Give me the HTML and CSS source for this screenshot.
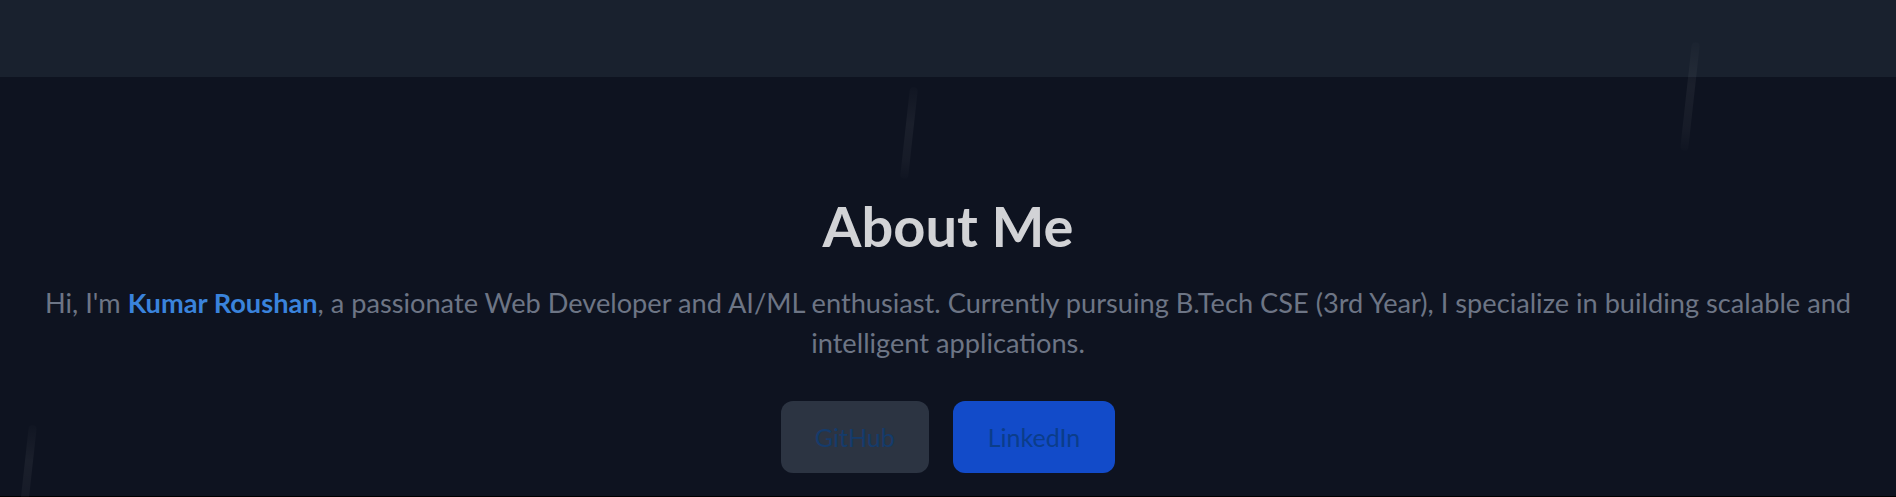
FILE: index.html
```html
<!DOCTYPE html>
<html lang="en">
<head>
<meta charset="utf-8">
<title>About Me</title>
<link rel="stylesheet" href="styles.css">
</head>
<body>
<div class="page">
  <header class="topbar"></header>
  <main class="about">
    <h1 class="about-title">About Me</h1>
    <p class="about-text">Hi, I'm <span class="name">Kumar Roushan</span>, a passionate Web Developer and AI/ML enthusiast. Currently pursuing B.Tech CSE (3rd Year), I specialize in building scalable and intelligent applications.</p>
    <div class="actions">
      <a class="btn btn-github" href="#">GitHub</a>
      <a class="btn btn-linkedin" href="#">LinkedIn</a>
    </div>
  </main>
  <div class="edge"></div>
  <span class="streak streak-a"></span>
  <span class="streak streak-b"></span>
  <span class="streak streak-c"></span>
</div>
</body>
</html>
```
FILE: styles.css
```css
* { box-sizing: border-box; }
html, body { margin: 0; padding: 0; }
body {
  background: #0e1320;
  font-family: Lato, "Noto Sans", sans-serif;
  overflow: hidden;
}
.page {
  position: relative;
  height: 497px;
  display: flex;
  flex-direction: column;
  overflow: hidden;
}
.topbar {
  height: 77px;
  background: #19212e;
  flex: none;
}
.about {
  flex: 1;
  display: flex;
  flex-direction: column;
  align-items: center;
  padding-top: 115px;
  text-align: center;
}
.about-title {
  margin: 0;
  font-size: 56px;
  line-height: 67px;
  font-weight: 700;
  color: #d2d3d6;
}
.about-text {
  margin: 24px 0 0;
  font-size: 27.2px;
  line-height: 40px;
  color: #6d7585;
  padding: 0 20px;
}
.name {
  color: #3a83dc;
  font-weight: 700;
}
.actions {
  margin-top: 38px;
  display: flex;
  gap: 24px;
}
.btn {
  display: block;
  height: 72px;
  line-height: 72px;
  border-radius: 12px;
  font-size: 25px;
  text-decoration: none;
}
.btn-github {
  background: #2c3442;
  color: #153b6b;
  padding: 0 34px;
}
.btn-linkedin {
  background: #124bc9;
  color: #0b3d8a;
  padding: 0 35px;
}
.edge {
  height: 1px;
  background: #000;
  flex: none;
}
.streak {
  position: absolute;
  width: 8px;
  border-radius: 4px;
  background: linear-gradient(to bottom, rgba(255,255,255,0.012), rgba(255,255,255,0.05) 40%, rgba(255,255,255,0.035) 80%, rgba(255,255,255,0.008));
  transform: rotate(6.3deg);
  transform-origin: center;
}
.streak-a { left: 905px; top: 87px; height: 92px; }
.streak-b { left: 1686px; top: 42px; height: 109px; }
.streak-c { left: 24px; top: 425px; height: 90px; }
```
